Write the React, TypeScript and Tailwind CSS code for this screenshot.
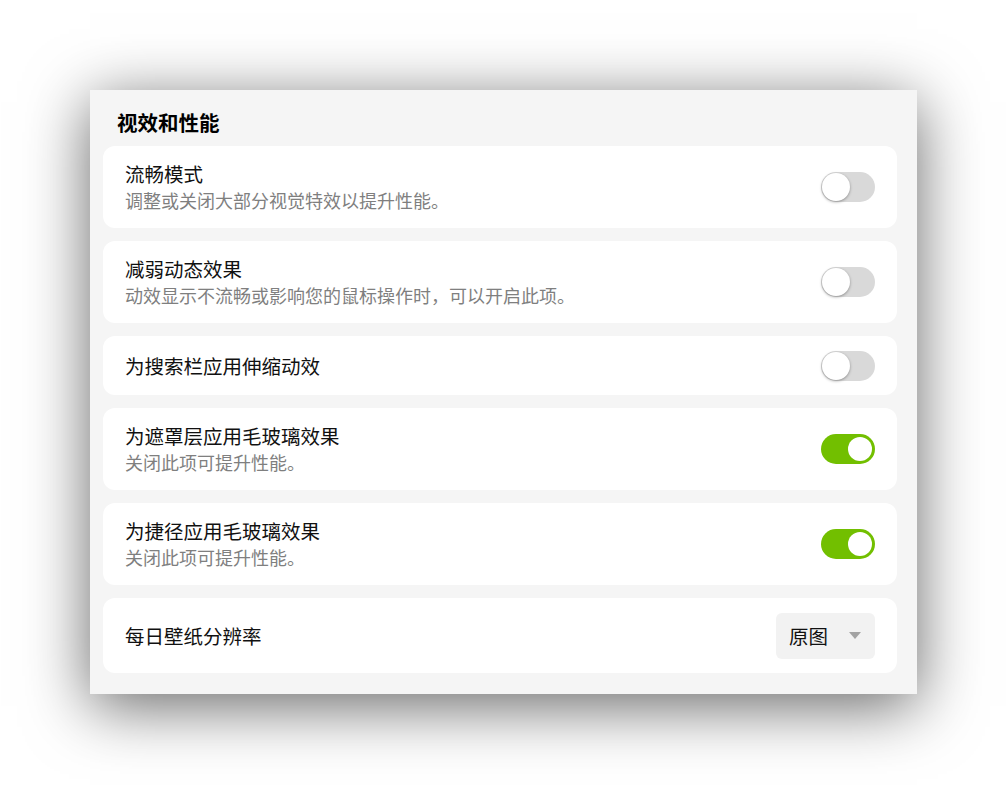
import React from "react";

type Row = {
  title: string;
  desc?: string;
  on: boolean;
};

const rows: Row[] = [
  { title: "流畅模式", desc: "调整或关闭大部分视觉特效以提升性能。", on: false },
  { title: "减弱动态效果", desc: "动效显示不流畅或影响您的鼠标操作时，可以开启此项。", on: false },
  { title: "为搜索栏应用伸缩动效", on: false },
  { title: "为遮罩层应用毛玻璃效果", desc: "关闭此项可提升性能。", on: true },
  { title: "为捷径应用毛玻璃效果", desc: "关闭此项可提升性能。", on: true },
];

function Toggle({ on }: { on: boolean }) {
  return (
    <div
      className={
        on
          ? "flex w-[54px] h-[30px] shrink-0 items-center justify-end rounded-full bg-[#72bf00] p-[3px]"
          : "flex w-[54px] h-[30px] shrink-0 items-center justify-start rounded-full bg-[#d9d9d9] p-[1px]"
      }
    >
      <span
        className={
          on
            ? "block w-[24px] h-[24px] rounded-full bg-white"
            : "block w-[28px] h-[28px] rounded-full bg-white shadow-[0_1px_3px_rgba(0,0,0,0.35)]"
        }
      />
    </div>
  );
}

export default function App() {
  return (
    <div className="min-h-[785px] w-full bg-white pt-[90px] pl-[90px] font-['Noto_Sans_CJK_SC','Noto_Sans',sans-serif]">
      <div className="flex w-[827px] h-[604px] flex-col bg-[#f5f5f5] pl-[13px] pr-[20px] pt-[18px] shadow-[0_12px_60px_rgba(0,0,0,0.6)]">
        <h2 className="mb-[10px] pl-[14px] text-[20.5px] leading-[28px] font-bold text-black">视效和性能</h2>
        <div className="flex flex-col gap-[13px]">
          {rows.map((row) => (
            <div
              key={row.title}
              className={
                "flex items-center justify-between rounded-[12px] bg-white px-[22px] " +
                (row.desc ? "h-[82px]" : "h-[59px]")
              }
            >
              <div className="flex flex-col">
                <p className="text-[19.5px] leading-[27px] text-[#111]">{row.title}</p>
                {row.desc && <p className="text-[18px] leading-[27px] text-[#7f7f7f]">{row.desc}</p>}
              </div>
              <Toggle on={row.on} />
            </div>
          ))}
          <div className="flex h-[75px] items-center justify-between rounded-[12px] bg-white pl-[22px] pr-[22px]">
            <p className="text-[19.5px] leading-[27px] text-[#111]">每日壁纸分辨率</p>
            <div className="flex w-[99px] h-[46px] items-center justify-between rounded-[6px] bg-[#f2f2f2] pl-[13px] pr-[14px]">
              <span className="text-[19.5px] leading-[27px] text-[#111]">原图</span>
              <svg width="12" height="7" viewBox="0 0 12 7">
                <path d="M0 0 L12 0 L6 7 Z" fill="#a3a3a3" />
              </svg>
            </div>
          </div>
        </div>
      </div>
    </div>
  );
}
